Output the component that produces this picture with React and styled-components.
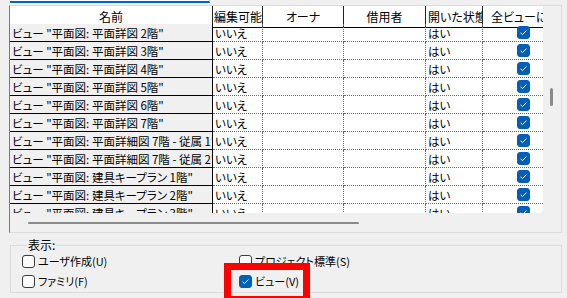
import React from 'react';
import styled, { createGlobalStyle } from 'styled-components';

const GlobalStyle = createGlobalStyle`
  html, body {
    margin: 0;
    background: #f0f0f0;
  }
`;

const Page = styled.div`
  width: 567px;
  height: 298px;
  overflow: hidden;
  box-sizing: border-box;
  padding-left: 9px;
  background: #f0f0f0;
  color: #000;
  font-family: "Noto Sans CJK JP", "Noto Sans", sans-serif;
  font-size: 11px;
  font-feature-settings: "palt" 1;
`;

const TopStrip = styled.div`
  height: 5px;
  display: flex;
`;

const TopField = styled.div`
  margin-left: 1px;
  width: 200px;
  height: 3px;
  background: #fff;
  border-bottom: 2px solid #0067c0;
  border-right: 1px solid #b8b8b8;
  box-sizing: border-box;
`;

const Frame = styled.div`
  width: 553px;
  height: 228px;
  box-sizing: border-box;
  border: 1px solid #dcdcdc;
  border-left-color: #7a7a7a;
  display: grid;
  grid-template-rows: 207px 1fr;
`;

const BodyRow = styled.div`
  display: flex;
  min-height: 0;
`;

const Viewport = styled.div`
  width: 533px;
  height: 207px;
  overflow: hidden;
  background: #fff;
  border-bottom-right-radius: 4px;
`;

const Grid = styled.div`
  display: grid;
  grid-template-columns: 203px 50px 81px 82px 57px 100px;
  grid-auto-rows: 18px;
  width: max-content;
  font-size: 11.5px;
`;

const HeadCell = styled.div`
  height: 22px;
  box-sizing: border-box;
  border-right: 1px solid #222;
  border-bottom: 1px solid #000;
  background: #fff;
  font-size: 12px;
  display: flex;
  align-items: center;
  justify-content: ${p => (p.$left !== undefined ? 'flex-start' : 'center')};
  padding-left: ${p => (p.$left !== undefined ? p.$left : 0)}px;
  white-space: nowrap;
  overflow: hidden;
`;

const RowHead = styled.div`
  box-sizing: border-box;
  border-right: 1px solid #000;
  border-bottom: 1px solid #000;
  background: #f0f0f0;
  padding-left: 2px;
  display: flex;
  align-items: center;
  white-space: nowrap;
  overflow: hidden;
`;

const Cell = styled.div`
  box-sizing: border-box;
  border-right: 1px dotted #6a6a6a;
  border-bottom: 1px dotted #6a6a6a;
  display: flex;
  align-items: center;
  padding-left: ${p => (p.$pad !== undefined ? p.$pad : 2)}px;
  white-space: nowrap;
  overflow: hidden;
`;

const VScroll = styled.div`
  flex: 1;
  padding-left: 7px;
  padding-top: 82px;
`;

const VThumb = styled.div`
  width: 3px;
  height: 18px;
  border-radius: 2px;
  background: #8a8a8a;
`;

const HScroll = styled.div`
  padding-left: 18px;
  padding-top: 9px;
`;

const HThumb = styled.div`
  width: 331px;
  height: 2px;
  border-radius: 1px;
  background: #8a8a8a;
`;

const Group = styled.fieldset`
  margin: 6px 0 0 1px;
  width: 552px;
  min-width: 0;
  box-sizing: border-box;
  border: 1px solid #dcdcdc;
  padding: 0 0 1px 11px;
`;

const Legend = styled.legend`
  margin-left: 5px;
  padding: 0 1px;
  font-size: 12px;
  line-height: 12px;
  height: 12px;
`;

const Options = styled.div`
  display: grid;
  grid-template-columns: 217px 1fr;
  grid-auto-rows: 20px;
`;

const Option = styled.label`
  position: relative;
  display: flex;
  align-items: center;
  gap: 3px;
  white-space: nowrap;
`;

const Box = styled.span`
  width: 13px;
  height: 13px;
  box-sizing: border-box;
  border-radius: 3px;
  flex: none;
  display: inline-flex;
  align-items: center;
  justify-content: center;
  background: ${p => (p.$on ? '#005fb8' : '#fbfbfb')};
  border: 1px solid ${p => (p.$on ? '#005fb8' : '#3c3c3c')};
`;

const Highlight = styled.span`
  position: absolute;
  left: -15px;
  top: -8px;
  width: 86px;
  height: 40px;
  box-sizing: border-box;
  border: 7px solid #ff0000;
  pointer-events: none;
`;

const CheckCell = styled(Cell)`
  padding-left: 34px;
`;

function Check({ on }) {
  return (
    <Box $on={on}>
      {on && (
        <svg width="11" height="11" viewBox="0 0 11 11">
          <path d="M2.6 5.8 L4.5 7.6 L8.4 3.6" fill="none" stroke="#fff" strokeWidth="1" />
        </svg>
      )}
    </Box>
  );
}

const rows = [
  'ビュー "平面図: 平面詳図 2階"',
  'ビュー "平面図: 平面詳図 3階"',
  'ビュー "平面図: 平面詳図 4階"',
  'ビュー "平面図: 平面詳図 5階"',
  'ビュー "平面図: 平面詳図 6階"',
  'ビュー "平面図: 平面詳図 7階"',
  'ビュー "平面図: 平面詳細図 7階 - 従属 1"',
  'ビュー "平面図: 平面詳細図 7階 - 従属 2"',
  'ビュー "平面図: 建具キープラン 1階"',
  'ビュー "平面図: 建具キープラン 2階"',
  'ビュー "平面図: 建具キープラン 3階"',
];

export default function App() {
  return (
    <Page>
      <GlobalStyle />
      <TopStrip>
        <TopField />
      </TopStrip>
      <Frame>
        <BodyRow>
          <Viewport>
            <Grid>
              <HeadCell>名前</HeadCell>
              <HeadCell $left={1}>編集可能</HeadCell>
              <HeadCell>オーナ</HeadCell>
              <HeadCell>借用者</HeadCell>
              <HeadCell $left={2}>開いた状態</HeadCell>
              <HeadCell $left={8}>全ビューに表示</HeadCell>
              {rows.map(name => (
                <React.Fragment key={name}>
                  <RowHead>{name}</RowHead>
                  <Cell>いいえ</Cell>
                  <Cell />
                  <Cell />
                  <Cell>はい</Cell>
                  <CheckCell>
                    <Check on />
                  </CheckCell>
                </React.Fragment>
              ))}
            </Grid>
          </Viewport>
          <VScroll>
            <VThumb />
          </VScroll>
        </BodyRow>
        <HScroll>
          <HThumb />
        </HScroll>
      </Frame>
      <Group>
        <Legend>表示:</Legend>
        <Options>
          <Option>
            <Check />
            ユーザ作成(U)
          </Option>
          <Option>
            <Check />
            プロジェクト標準(S)
          </Option>
          <Option>
            <Check />
            ファミリ(F)
          </Option>
          <Option>
            <Check on />
            ビュー(V)
            <Highlight />
          </Option>
        </Options>
      </Group>
    </Page>
  );
}
